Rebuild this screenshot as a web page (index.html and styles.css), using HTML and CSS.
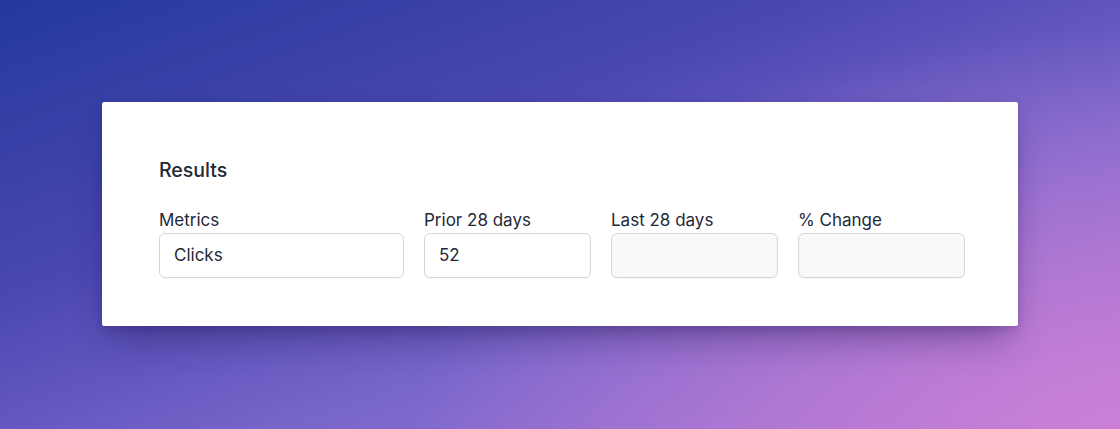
FILE: index.html
```html
<!DOCTYPE html>
<html>
<head>
<meta charset="utf-8">
<link rel="stylesheet" href="styles.css">
</head>
<body>
<div class="stage">
  <section class="card">
    <h2 class="title">Results</h2>
    <div class="fields">
      <label class="field">
        <span class="label">Metrics</span>
        <span class="input">Clicks</span>
      </label>
      <label class="field">
        <span class="label">Prior 28 days</span>
        <span class="input">52</span>
      </label>
      <label class="field">
        <span class="label">Last 28 days</span>
        <span class="input disabled"></span>
      </label>
      <label class="field">
        <span class="label">% Change</span>
        <span class="input disabled"></span>
      </label>
    </div>
  </section>
</div>
</body>
</html>
```
FILE: styles.css
```css
* { box-sizing: border-box; }
html, body { margin: 0; height: 100%; }
body {
  font-family: Inter, "Noto Sans", sans-serif;
  color: #1f2937;
}
.stage {
  width: 1120px;
  height: 429px;
  padding: 102px 102px 0 102px;
  background:
    radial-gradient(ellipse 700px 400px at 1120px 429px, rgba(205,128,214,0.9), rgba(205,128,214,0) 100%),
    linear-gradient(160deg, #24399c 0%, #4a47b0 35%, #7a67cc 65%, #b07ad6 100%);
}
.card {
  width: 916px;
  height: 224px;
  background: #fff;
  border-radius: 2px;
  padding: 56px 56px 0 57px;
  box-shadow: 0 20px 35px -10px rgba(30, 20, 80, 0.45), 0 4px 10px rgba(30,20,80,0.15);
}
.title {
  margin: 0;
  font-size: 19.5px;
  line-height: 24px;
  font-weight: 500;
  color: #1f2937;
}
.fields {
  display: grid;
  grid-template-columns: 245px 167px 167px 167px;
  column-gap: 20px;
  margin-top: 27px;
}
.field { display: flex; flex-direction: column; }
.label {
  font-size: 17px;
  line-height: 22px;
  color: #1f2937;
  margin-bottom: 2px;
}
.input {
  display: block;
  height: 45px;
  border: 1px solid #d6d6de;
  border-radius: 6px;
  padding: 0 14px;
  font-size: 17px;
  line-height: 43px;
  color: #1f2937;
  background: #fff;
  box-shadow: 0 1px 1px rgba(0,0,0,0.03);
}
.input.disabled { background: #f9f9fa; }
```
